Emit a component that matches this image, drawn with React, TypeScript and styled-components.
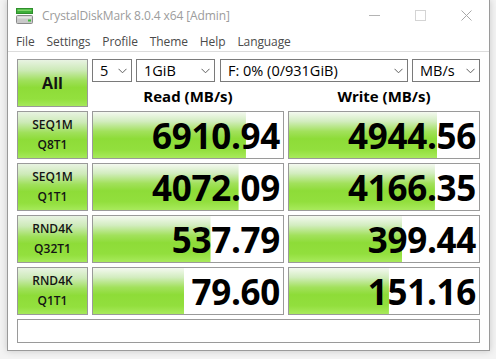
import React from "react";
import styled, { createGlobalStyle } from "styled-components";

const GlobalStyle = createGlobalStyle`
  html, body { margin: 0; padding: 0; }
  body {
    background: #f3f3f3;
    font-family: "Open Sans", "Noto Sans", Arial, sans-serif;
    width: 496px;
    height: 359px;
    overflow: hidden;
  }
`;

const Page = styled.div`
  width: 496px;
  height: 359px;
  padding-left: 7px;
  box-sizing: border-box;
`;

const Window = styled.div`
  width: 483px;
  height: 351px;
  box-sizing: border-box;
  background: #ffffff;
  border: 1px solid #9a9a9a;
  border-top: none;
  box-shadow: 0 0 7px rgba(0, 0, 0, 0.18);
  display: flex;
  flex-direction: column;
`;

const TitleBar = styled.div`
  height: 31px;
  display: flex;
  align-items: center;
  padding-left: 8px;
  flex-shrink: 0;
`;

const TitleText = styled.span`
  margin-left: 9px;
  font-size: 12px;
  color: #9c9c9c;
  letter-spacing: -0.1px;
  flex: 1;
`;

const WinButton = styled.div`
  width: 46px;
  height: 31px;
  display: flex;
  align-items: center;
  justify-content: center;
`;

const MenuBar = styled.div`
  height: 20px;
  display: flex;
  align-items: center;
  gap: 12px;
  padding-left: 8px;
  border-bottom: 1px solid #dcdcdc;
  flex-shrink: 0;
`;

const MenuItem = styled.span`
  font-size: 12px;
  color: #4a4a4a;
  letter-spacing: -0.1px;
`;

const Content = styled.div`
  padding: 7px 9px 7px 9px;
  display: flex;
  flex-direction: column;
  gap: 4px;
`;

const TopSection = styled.div`
  display: flex;
  gap: 4px;
  height: 48px;
`;

const greenGrad = `linear-gradient(to bottom, #e8f3e2 0%, #cdeab8 22%, #9fe05a 45%, #8edc38 60%, #93e03e 85%, #a5e95a 100%)`;

const GreenButton = styled.div<{ $big?: boolean }>`
  width: 71px;
  height: 48px;
  box-sizing: border-box;
  border: 1px solid #9a9a9a;
  background: ${greenGrad};
  display: flex;
  flex-direction: column;
  align-items: center;
  justify-content: center;
  color: #141414;
  font-weight: ${(p) => (p.$big ? 700 : 600)};
  font-size: ${(p) => (p.$big ? "16px" : "12px")};
  line-height: 20px;
  flex-shrink: 0;
`;

const RightTop = styled.div`
  display: flex;
  flex-direction: column;
  width: 388px;
`;

const ComboRow = styled.div`
  display: flex;
  gap: 4px;
  height: 23px;
`;

const Combo = styled.div<{ $w: number; $ml?: number }>`
  width: ${(p) => p.$w}px;
  margin-left: ${(p) => p.$ml ?? 0}px;
  height: 23px;
  box-sizing: border-box;
  border: 1px solid #7a7a7a;
  background: #fff;
  display: flex;
  align-items: center;
  padding: 0 4px 0 7px;
  font-size: 14.5px;
  color: #000;
`;

const ComboText = styled.span`
  flex: 1;
  white-space: nowrap;
`;

const HeaderRow = styled.div`
  display: grid;
  grid-template-columns: 192px 192px;
  column-gap: 4px;
  height: 25px;
`;

const Header = styled.div`
  text-align: center;
  font-weight: 700;
  font-size: 15px;
  line-height: 22px;
  align-self: end;
  color: #000;
`;

const ResultRow = styled.div`
  display: grid;
  grid-template-columns: 71px 192px 192px;
  column-gap: 4px;
  height: 48px;
`;

const ValueBox = styled.div<{ $fill: number }>`
  box-sizing: border-box;
  border: 1px solid #9a9a9a;
  background-color: #ffffff;
  background-image: linear-gradient(to bottom, #f4f9f0 0%, #d3edc0 20%, #a2e15c 42%, #8edc38 58%, #92df3d 82%, #a8ea5c 100%);
  background-repeat: no-repeat;
  background-size: ${(p) => p.$fill}% 100%;
  display: flex;
  align-items: center;
  justify-content: flex-end;
  padding-right: 3px;
  font-weight: 700;
  font-size: 35px;
  line-height: 1;
  color: #000;
  letter-spacing: -0.3px;
`;

const CommentBox = styled.div`
  height: 24px;
  box-sizing: border-box;
  border: 1px solid #9a9a9a;
  background: #fff;
`;

const Chevron = () => (
  <svg width="9" height="6" viewBox="0 0 9 6">
    <polyline points="0.5,0.8 4.5,4.8 8.5,0.8" fill="none" stroke="#606060" strokeWidth="1" />
  </svg>
);

const AppIcon = () => (
  <svg width="17" height="16" viewBox="0 0 17 16">
    <rect x="0.5" y="0.5" width="16" height="5" fill="#3dae3a" stroke="#2f8f2c" />
    <rect x="1.5" y="1.5" width="14" height="1.5" fill="#7fd46a" />
    <rect x="0.5" y="7.5" width="16" height="8" rx="1" fill="#c9c9c9" stroke="#8a8a8a" />
    <rect x="1.5" y="8.5" width="14" height="2" fill="#e4e4e4" />
    <rect x="12" y="11.5" width="3" height="2" fill="#3dbb3a" />
  </svg>
);

type Result = { l1: string; l2: string; read: number; write: number };

const results: Result[] = [
  { l1: "SEQ1M", l2: "Q8T1", read: 6910.94, write: 4944.56 },
  { l1: "SEQ1M", l2: "Q1T1", read: 4072.09, write: 4166.35 },
  { l1: "RND4K", l2: "Q32T1", read: 537.79, write: 399.44 },
  { l1: "RND4K", l2: "Q1T1", read: 79.6, write: 151.16 },
];

const fillPct = (v: number) => Math.max(0, Math.min(100, ((Math.log10(v) + 0.95) / 5.95) * 100));

export default function App() {
  return (
    <>
      <GlobalStyle />
      <Page>
        <Window>
          <TitleBar>
            <AppIcon />
            <TitleText>CrystalDiskMark 8.0.4 x64 [Admin]</TitleText>
            <WinButton>
              <svg width="11" height="2" viewBox="0 0 11 2">
                <line x1="0" y1="0.5" x2="11" y2="0.5" stroke="#b4b4b4" strokeWidth="1" />
              </svg>
            </WinButton>
            <WinButton>
              <svg width="11" height="11" viewBox="0 0 11 11">
                <rect x="0.5" y="0.5" width="10" height="10" fill="none" stroke="#d4d4d4" strokeWidth="1" />
              </svg>
            </WinButton>
            <WinButton>
              <svg width="11" height="11" viewBox="0 0 11 11">
                <path d="M0.5 0.5 L10.5 10.5 M10.5 0.5 L0.5 10.5" stroke="#a8a8a8" strokeWidth="1" />
              </svg>
            </WinButton>
          </TitleBar>
          <MenuBar>
            <MenuItem>File</MenuItem>
            <MenuItem>Settings</MenuItem>
            <MenuItem>Profile</MenuItem>
            <MenuItem>Theme</MenuItem>
            <MenuItem>Help</MenuItem>
            <MenuItem>Language</MenuItem>
          </MenuBar>
          <Content>
            <TopSection>
              <GreenButton $big>All</GreenButton>
              <RightTop>
                <ComboRow>
                  <Combo $w={40}>
                    <ComboText>5</ComboText>
                    <Chevron />
                  </Combo>
                  <Combo $w={79}>
                    <ComboText>1GiB</ComboText>
                    <Chevron />
                  </Combo>
                  <Combo $w={188} $ml={1}>
                    <ComboText>F: 0% (0/931GiB)</ComboText>
                    <Chevron />
                  </Combo>
                  <Combo $w={68}>
                    <ComboText>MB/s</ComboText>
                    <Chevron />
                  </Combo>
                </ComboRow>
                <HeaderRow>
                  <Header>Read (MB/s)</Header>
                  <Header>Write (MB/s)</Header>
                </HeaderRow>
              </RightTop>
            </TopSection>
            {results.map((r, i) => (
              <ResultRow key={i}>
                <GreenButton>
                  <span>{r.l1}</span>
                  <span>{r.l2}</span>
                </GreenButton>
                <ValueBox $fill={fillPct(r.read)}>{r.read.toFixed(2)}</ValueBox>
                <ValueBox $fill={fillPct(r.write)}>{r.write.toFixed(2)}</ValueBox>
              </ResultRow>
            ))}
            <CommentBox />
          </Content>
        </Window>
      </Page>
    </>
  );
}
